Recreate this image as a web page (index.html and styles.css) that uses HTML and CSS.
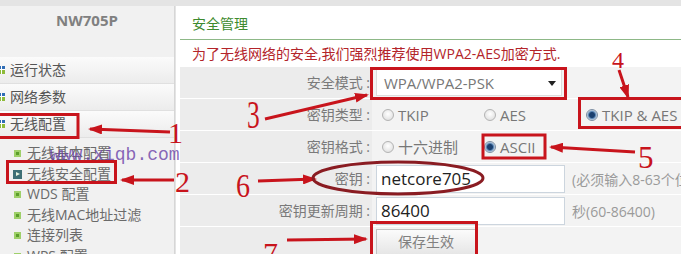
FILE: index.html
```html
<!DOCTYPE html>
<html lang="zh-CN">
<head>
<meta charset="utf-8">
<title>NW705P 无线安全配置</title>
<link rel="stylesheet" href="styles.css">
</head>
<body>
<div class="page">
  <aside class="sidebar">
    <div class="brand">NW705P</div>
    <nav class="menu">
      <div class="menu-item"><span class="mi-icon"></span>运行状态</div>
      <div class="menu-item"><span class="mi-icon"></span>网络参数</div>
      <div class="menu-item"><span class="mi-icon"></span>无线配置</div>
      <ul class="submenu">
        <li><span class="bullet"></span>无线基本配置</li>
        <li><span class="bullet play"></span>无线安全配置</li>
        <li><span class="bullet"></span>WDS 配置</li>
        <li><span class="bullet"></span>无线MAC地址过滤</li>
        <li><span class="bullet"></span>连接列表</li>
        <li><span class="bullet"></span>WPS 配置</li>
      </ul>
    </nav>
  </aside>
  <main class="panel">
    <h1 class="panel-title">安全管理</h1>
    <p class="notice">为了无线网络的安全,我们强烈推荐使用WPA2-AES加密方式.</p>
    <div class="form">
      <div class="row">
        <div class="label">安全模式 :</div>
        <div class="value"><div class="select">WPA/WPA2-PSK<span class="caret"></span></div></div>
      </div>
      <div class="row">
        <div class="label">密钥类型 :</div>
        <div class="value">
          <span class="opt"><span class="radio"></span>TKIP</span>
          <span class="opt"><span class="radio"></span>AES</span>
          <span class="opt"><span class="radio checked"></span>TKIP &amp; AES</span>
        </div>
      </div>
      <div class="row">
        <div class="label">密钥格式 :</div>
        <div class="value">
          <span class="opt"><span class="radio"></span>十六进制</span>
          <span class="opt"><span class="radio checked"></span>ASCII</span>
        </div>
      </div>
      <div class="row">
        <div class="label">密钥 :</div>
        <div class="value"><div class="input">netcore705</div><span class="hint">(必须输入8-63个位数的字符)</span></div>
      </div>
      <div class="row">
        <div class="label">密钥更新周期 :</div>
        <div class="value"><div class="input">86400</div><span class="hint">秒(60-86400)</span></div>
      </div>
      <div class="row row-btn">
        <div class="label"></div>
        <div class="value"><div class="btn">保存生效</div></div>
      </div>
    </div>
  </main>
</div>
<div class="watermark">www.xiqb.com</div>
<svg class="annot" width="681" height="254" viewBox="0 0 681 254">
  <defs>
    <marker id="ah" markerUnits="userSpaceOnUse" markerWidth="14" markerHeight="10" refX="12" refY="5" orient="auto">
      <path d="M0,0 L14,5 L0,10 z" fill="#c8141c"/>
    </marker>
  </defs>
  <g fill="none" stroke="#c8141c" stroke-width="3">
    <rect x="-3" y="114.5" width="81" height="23"/>
    <rect x="7.5" y="161.5" width="108" height="21"/>
    <rect x="371.5" y="68.5" width="194" height="30"/>
    <rect x="579.5" y="98.5" width="110" height="29"/>
    <rect x="483" y="135" width="62" height="23"/>
    <rect x="371.5" y="222.5" width="105" height="40"/>
    <line x1="170" y1="132" x2="90" y2="129" marker-end="url(#ah)"/>
    <line x1="174" y1="180" x2="122" y2="180" marker-end="url(#ah)"/>
    <line x1="265" y1="119" x2="367" y2="95" marker-end="url(#ah)"/>
    <line x1="619" y1="70" x2="628" y2="97" marker-end="url(#ah)"/>
    <line x1="635" y1="152" x2="551" y2="147" marker-end="url(#ah)"/>
    <line x1="258" y1="181" x2="315" y2="179" marker-end="url(#ah)"/>
    <line x1="287" y1="240" x2="366" y2="239" marker-end="url(#ah)"/>
  </g>
  <ellipse cx="398" cy="178" rx="85" ry="16" fill="none" stroke="#8a1c22" stroke-width="3"/>
  <g class="num">
    <text x="168" y="143" font-size="30">1</text>
    <text x="175" y="192" font-size="30">2</text>
    <text transform="translate(247,128) scale(0.62,1)" font-size="41">3</text>
    <text x="612" y="68" font-size="24">4</text>
    <text x="638" y="168" font-size="31">5</text>
    <text transform="translate(236,197) scale(0.85,1)" font-size="33">6</text>
    <text x="263" y="263" font-size="30">7</text>
  </g>
</svg>
</body>
</html>
```

FILE: styles.css
```css
html, body {
  margin: 0;
  padding: 0;
}

body {
  width: 681px;
  height: 254px;
  overflow: hidden;
  position: relative;
  background: #e4e4e4;
  font-family: "Open Sans", "Noto Sans CJK SC", sans-serif;
}

.page {
  display: flex;
  padding-top: 6px;
  height: 248px;
}

/* ---------- sidebar ---------- */
.sidebar {
  width: 174px;
  flex: none;
  background: #f1f1f1;
  border-right: 1px solid #d6d6d6;
}

.brand {
  height: 28px;
  line-height: 28px;
  margin-bottom: 23px;
  text-align: center;
  font-weight: bold;
  font-size: 15px;
  color: #808080;
}

.menu-item {
  position: relative;
  height: 26px;
  line-height: 26px;
  padding-left: 10px;
  border-bottom: 1px solid #e0e0e0;
  background: linear-gradient(#fbfbfb, #ececec);
  font-size: 14px;
  color: #555;
}

.mi-icon {
  position: absolute;
  left: -2px;
  top: 9px;
  width: 7px;
  height: 8px;
  background:
    linear-gradient(90deg, transparent 3px, #fff 3px, #fff 4px, transparent 4px),
    linear-gradient(#2f6db5 0 3px, #fff 3px 4px, #8dbb3a 4px);
}

.submenu {
  list-style: none;
  margin: 0;
  padding: 5px 0 0 0;
}

.submenu li {
  position: relative;
  height: 20.5px;
  line-height: 20.5px;
  padding-left: 27px;
  font-size: 14px;
  color: #6a6a6a;
  white-space: nowrap;
}

.bullet {
  position: absolute;
  left: 14px;
  top: 7px;
  width: 7px;
  height: 7px;
  box-sizing: border-box;
  background: #5c9e2c;
  border: 2px solid #9fd06a;
}

.bullet.play {
  left: 13px;
  top: 6px;
  width: 9px;
  height: 9px;
  border: none;
  background: #3e6f76;
}

.bullet.play::after {
  content: "";
  position: absolute;
  left: 3px;
  top: 2px;
  border-left: 4px solid #e8f4e0;
  border-top: 2.5px solid transparent;
  border-bottom: 2.5px solid transparent;
}

/* ---------- main panel ---------- */
.panel {
  flex: 1;
  min-width: 0;
  overflow: hidden;
  background: #fff;
  margin-left: 1px;
}

.panel-title {
  margin: 0 0 0 4px;
  height: 33px;
  line-height: 36px;
  padding-left: 12px;
  font-size: 14px;
  font-weight: normal;
  color: #3d8a2e;
  border-bottom: 1px solid #8db887;
}

.notice {
  margin: 0 0 0 4px;
  padding-left: 12px;
  height: 27px;
  line-height: 28px;
  font-size: 14px;
  color: #b3242a;
  white-space: nowrap;
}

.form {
  margin-left: 4px;
}

.row {
  display: flex;
  height: 31px;
  border-bottom: 1px solid #fff;
  background: #f3f3f3;
}

.label {
  width: 192px;
  flex: none;
  box-sizing: border-box;
  padding-right: 2px;
  text-align: right;
  line-height: 31px;
  font-size: 14px;
  color: #7a7a7a;
  background: #ececec;
}

.value {
  flex: 1;
  display: flex;
  align-items: center;
  padding-left: 4px;
  white-space: nowrap;
}

.select {
  position: relative;
  width: 186px;
  height: 27px;
  box-sizing: border-box;
  padding-left: 7px;
  line-height: 26px;
  background: #fff;
  border: 1px solid #ddd;
  font-size: 15px;
  color: #777;
}

.caret {
  position: absolute;
  right: 5px;
  top: 11px;
  border-top: 5px solid #222;
  border-left: 4px solid transparent;
  border-right: 4px solid transparent;
}

.opt {
  width: 102px;
  display: flex;
  align-items: center;
  font-size: 15px;
  color: #777;
}

.radio {
  width: 12px;
  height: 12px;
  box-sizing: border-box;
  border-radius: 50%;
  border: 1px solid #b3b3b3;
  background: radial-gradient(circle at 50% 40%, #fff, #d9d9d9);
  margin: 0 4px 0 6px;
}

.radio.checked {
  border-color: #7c8ea3;
  background: radial-gradient(circle, #1b3f6e 0 2.5px, #5b86b5 3.5px, #cfdbe8 5px);
}

.input {
  width: 189px;
  height: 28px;
  box-sizing: border-box;
  padding-left: 4px;
  line-height: 26px;
  background: #fff;
  border: 1px solid #ccd5de;
  font-size: 17px;
  color: #222;
}

.hint {
  margin-left: 7px;
  font-size: 14px;
  color: #9a9a9a;
}

.row-btn .value {
  align-items: flex-start;
  padding-top: 2px;
}

.btn {
  width: 100px;
  height: 26px;
  box-sizing: border-box;
  line-height: 24px;
  text-align: center;
  border: 1px solid #c2c2c2;
  background: linear-gradient(#fbfbfb, #e6e6e6);
  font-size: 14px;
  color: #808080;
}

/* ---------- overlays ---------- */
.watermark {
  position: absolute;
  left: 50px;
  top: 145px;
  line-height: 20px;
  font-family: "Liberation Mono", monospace;
  font-size: 18px;
  color: rgba(106, 66, 168, 0.8);
  pointer-events: none;
}

.annot {
  position: absolute;
  left: 0;
  top: 0;
  pointer-events: none;
}

.num text {
  font-family: "Liberation Serif", serif;
  fill: #c8141c;
}
```
